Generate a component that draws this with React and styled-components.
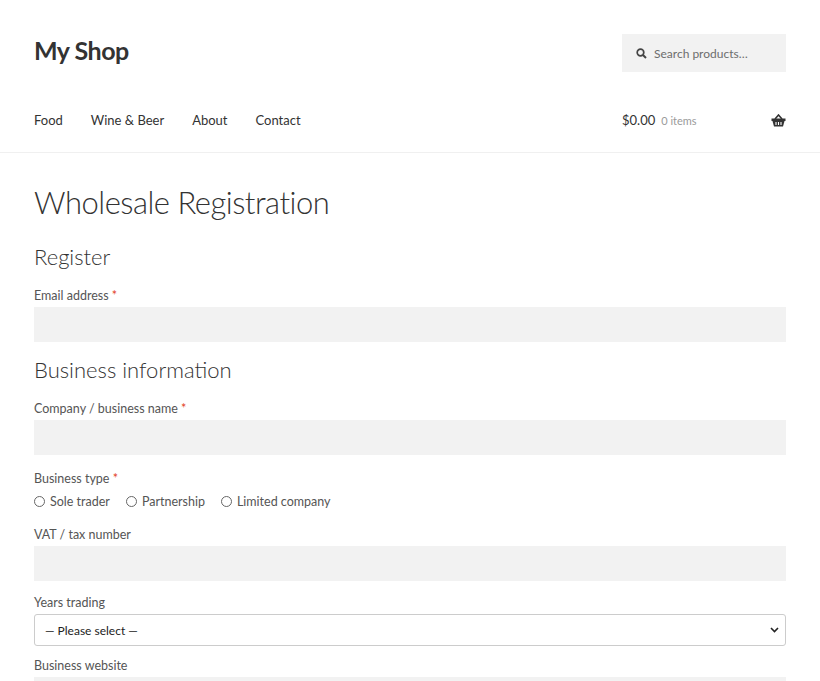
import React from "react";
import styled, { createGlobalStyle } from "styled-components";

const Global = createGlobalStyle`
  body { margin: 0; background: #fff; font-family: Lato, "Open Sans", sans-serif; color: #43454b; }
`;

const Wrap = styled.div`
  padding: 0 34px;
`;
const Header = styled.header`
  border-bottom: 1px solid #f0f0f0;
`;
const TopRow = styled.div`
  display: flex;
  justify-content: space-between;
  align-items: center;
  padding-top: 34px;
  height: 38px;
`;
const Logo = styled.div`
  font-size: 25px;
  font-weight: 700;
  color: #333;
  letter-spacing: -0.5px;
  margin-top: -6px;
`;
const Search = styled.div`
  width: 164px;
  height: 38px;
  background: #f2f2f2;
  display: flex;
  align-items: center;
  gap: 7px;
  padding-left: 14px;
  box-sizing: border-box;
  font-size: 12px;
  color: #6d6d6d;
`;
const NavRow = styled.div`
  display: flex;
  align-items: center;
  height: 64px;
  padding-top: 16px;
`;
const NavLink = styled.a`
  font-size: 13px;
  color: #333;
  margin-right: 28px;
`;
const Cart = styled.div`
  margin-left: auto;
  width: 164px;
  display: flex;
  align-items: center;
  font-size: 13px;
  color: #333;
`;
const Items = styled.span`
  color: #9a9a9a;
  font-size: 11px;
  margin-left: 6px;
  flex: 1;
`;
const Title = styled.h1`
  font-weight: 300;
  font-size: 31px;
  margin: 30px 0 22px;
  color: #333;
  letter-spacing: -0.5px;
`;
const Section = styled.h2`
  font-weight: 300;
  font-size: 22px;
  margin: 0 0 18px;
  color: #333;
`;
const Label = styled.div`
  font-size: 12.5px;
  color: #555;
  margin-bottom: 4px;
  span { color: #e2401c; }
`;
const Input = styled.div`
  height: 35px;
  background: #f2f2f2;
  margin-bottom: ${p => p.$mb || 21}px;
`;
const Radios = styled.div`
  display: flex;
  gap: 16px;
  font-size: 12.5px;
  color: #555;
  margin: 8px 0 18px;
`;
const Radio = styled.label`
  display: flex;
  align-items: center;
  gap: 5px;
  &::before {
    content: "";
    width: 9px;
    height: 9px;
    border: 1px solid #666;
    border-radius: 50%;
  }
`;
const Select = styled.div`
  height: 30px;
  border: 1px solid #ccc;
  border-radius: 3px;
  display: flex;
  align-items: center;
  justify-content: space-between;
  padding: 0 6px 0 10px;
  font-size: 12px;
  color: #222;
  margin-bottom: 12px;
`;

const Basket = () => (
  <svg width="15" height="13" viewBox="0 0 15 13">
    <path d="M4 5 L7.5 1 L11 5" stroke="#333" strokeWidth="1.6" fill="none" />
    <rect x="0.5" y="4.5" width="14" height="2.5" fill="#333" />
    <path d="M1.5 7 L3 12.5 H12 L13.5 7 Z" fill="#333" />
    <path d="M5 8 V11 M7.5 8 V11 M10 8 V11" stroke="#fff" strokeWidth="1.1" />
  </svg>
);

export default function App() {
  return (
    <>
      <Global />
      <Header>
        <Wrap>
          <TopRow>
            <Logo>My Shop</Logo>
            <Search>
              <svg width="11" height="11" viewBox="0 0 11 11">
                <circle cx="4.5" cy="4.5" r="3.3" stroke="#444" strokeWidth="1.7" fill="none" />
                <path d="M7 7 L10 10" stroke="#444" strokeWidth="2" />
              </svg>
              Search products…
            </Search>
          </TopRow>
          <NavRow>
            <NavLink>Food</NavLink>
            <NavLink>Wine &amp; Beer</NavLink>
            <NavLink>About</NavLink>
            <NavLink>Contact</NavLink>
            <Cart>
              $0.00<Items>0 items</Items>
              <Basket />
            </Cart>
          </NavRow>
        </Wrap>
      </Header>
      <Wrap>
        <Title>Wholesale Registration</Title>
        <Section>Register</Section>
        <Label>Email address <span>*</span></Label>
        <Input $mb={14} />
        <Section>Business information</Section>
        <Label>Company / business name <span>*</span></Label>
        <Input $mb={16} />
        <Label>Business type <span>*</span></Label>
        <Radios>
          <Radio>Sole trader</Radio>
          <Radio>Partnership</Radio>
          <Radio>Limited company</Radio>
        </Radios>
        <Label>VAT / tax number</Label>
        <Input $mb={14} />
        <Label>Years trading</Label>
        <Select>
          — Please select —
          <svg width="9" height="6" viewBox="0 0 9 6"><path d="M1 1 L4.5 4.5 L8 1" stroke="#222" strokeWidth="1.6" fill="none" /></svg>
        </Select>
        <Label>Business website</Label>
        <Input />
      </Wrap>
    </>
  );
}
